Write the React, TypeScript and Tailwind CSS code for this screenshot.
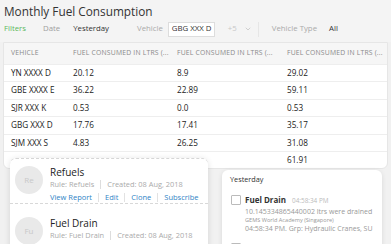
import { ChevronDown } from "lucide-react";

const rows = [
  ["YN XXXX D", "20.12", "8.9", "29.02"],
  ["GBE XXXX E", "36.22", "22.89", "59.11"],
  ["SJR XXX K", "0.53", "0.0", "0.53"],
  ["GBG XXX D", "17.76", "17.41", "35.17"],
  ["SJM XXX S", "4.83", "26.25", "31.08"],
  ["", "", "", "61.91"],
];

const font = { fontFamily: '"Open Sans", "Noto Sans", sans-serif' };

function Sep() {
  return <span className="mx-[6px] h-[9px] w-px bg-[#e2e2e2]" />;
}

function RuleRow({ initials, name, rule, first }: { initials: string; name: string; rule: string; first?: boolean }) {
  return (
    <div
      className={`flex gap-[7px] pl-[5px] ${first ? "h-[45px] border-b border-dashed border-[#d8d8d8] pt-[7px]" : "h-[50px] pt-[13px]"}`}
    >
      <div className="flex h-[28px] w-[28px] shrink-0 items-center justify-center rounded-full bg-[#e9e9e9] text-[8px] text-[#c8c8c8]">
        {initials}
      </div>
      <div className="flex flex-col">
        <div className="text-[10px] leading-[13px] text-[#222]">{name}</div>
        <div className="flex items-center text-[7.4px] leading-[10px] text-[#aaa]">
          <span>Rule: {rule}</span>
          <span className="mx-[6px] h-[9px] w-px bg-[#ddd]" />
          <span>Created: 08 Aug, 2018</span>
        </div>
        {first && (
          <div className="mt-[3px] flex items-center text-[7.5px] leading-[10px] text-[#2f84c6]">
            <span>View Report</span>
            <Sep />
            <span>Edit</span>
            <Sep />
            <span>Clone</span>
            <Sep />
            <span>Subscribe</span>
          </div>
        )}
      </div>
    </div>
  );
}

export default function App() {
  return (
    <div className="relative h-[244px] w-[391px] overflow-hidden whitespace-nowrap bg-[#f1f1f1]" style={font}>
      <div className="flex flex-col bg-[#f4f4f4] pt-[3px] pb-[3px]">
        <h1 className="pl-[4px] text-[11.8px] leading-[16px] text-[#333]">Monthly Fuel Consumption</h1>
        <div className="flex h-[20px] items-center text-[7.8px]">
          <span className="ml-[4px] text-[#5cb85c]">Filters</span>
          <span className="ml-[17px] text-[#a0a0a0]">Date</span>
          <span className="ml-[13px] text-[#333]">Yesterday</span>
          <span className="ml-[28px] text-[#aaa]">Vehicle</span>
          <span className="ml-[5px] flex h-[15px] w-[47px] items-center border border-[#ddd] bg-white pl-[3px] text-[#333]">
            GBG XXX D
          </span>
          <span className="ml-[13px] text-[#c8c8c8]">+5</span>
          <ChevronDown className="ml-[7px] text-[#aaa]" size={8} strokeWidth={1.5} />
          <span className="ml-[6px] h-[15px] w-px bg-[#e6e6e6]" />
          <span className="ml-[13px] text-[#aaa]">Vehicle Type</span>
          <span className="ml-[12px] text-[#333]">All</span>
        </div>
      </div>
      <div className="mx-[3px] overflow-hidden rounded-b-[6px] border border-[#e6e6e6] bg-white">
        <div className="grid h-[21px] grid-cols-[62px_104px_110px_1fr] items-center bg-[#f6f6f6] pl-[7px] text-[6.8px] tracking-[0.2px] text-[#8a8a8a]">
          <span>VEHICLE</span>
          <span className="overflow-hidden">FUEL CONSUMED IN LTRS (...</span>
          <span className="overflow-hidden">FUEL CONSUMED IN LTRS (...</span>
          <span className="overflow-hidden">FUEL CONSUMED IN LTRS (...</span>
        </div>
        {rows.map((r, i) => (
          <div
            key={i}
            className="grid h-[17.4px] grid-cols-[62px_104px_110px_1fr] items-center border-t border-[#eee] pl-[7px] text-[8.2px] text-[#222]"
          >
            {r.map((c, j) => (
              <span key={j}>{c}</span>
            ))}
          </div>
        ))}
      </div>

      <div className="absolute left-[10px] top-[158px] w-[198px] rounded-[6px] border-t border-dashed border-[#d6d6d6] bg-white shadow-[0_1px_6px_rgba(0,0,0,0.12)]">
        <RuleRow initials="Re" name="Refuels" rule="Refuels" first />
        <RuleRow initials="Fu" name="Fuel Drain" rule="Fuel Drain" />
      </div>

      <div className="absolute left-[222px] top-[170px] h-[90px] w-[160px] overflow-hidden rounded-[6px] bg-white shadow-[0_1px_5px_rgba(0,0,0,0.1)]">
        <div className="pl-[8px] pt-[4px] text-[7.3px] leading-[11px] text-[#333]">Yesterday</div>
        <div className="mt-[9px] flex gap-[4px] pl-[9px]">
          <div className="mt-[1px] h-[10px] w-[10px] shrink-0 rounded-[1px] border border-[#bbb] bg-white" />
          <div className="flex flex-col">
            <div className="flex items-baseline gap-[6px]">
              <span className="text-[8px] font-bold leading-[12px] text-[#333]">Fuel Drain</span>
              <span className="text-[6.4px] text-[#bbb]">04:58:34 PM</span>
            </div>
            <div className="mt-[1px] text-[7px] leading-[9px] text-[#999]">10.145334865440002 ltrs were drained</div>
            <div className="text-[5.6px] leading-[8px] text-[#999]">GEMS World Academy (Singapore)</div>
            <div className="text-[7px] leading-[9px] text-[#999]">04:58:34 PM. Grp: Hydraulic Cranes, SU</div>
          </div>
        </div>
        <div className="mt-[10px] flex gap-[4px] pl-[9px]">
          <div className="h-[10px] w-[10px] shrink-0 rounded-[1px] border border-[#bbb] bg-white" />
        </div>
      </div>
    </div>
  );
}
